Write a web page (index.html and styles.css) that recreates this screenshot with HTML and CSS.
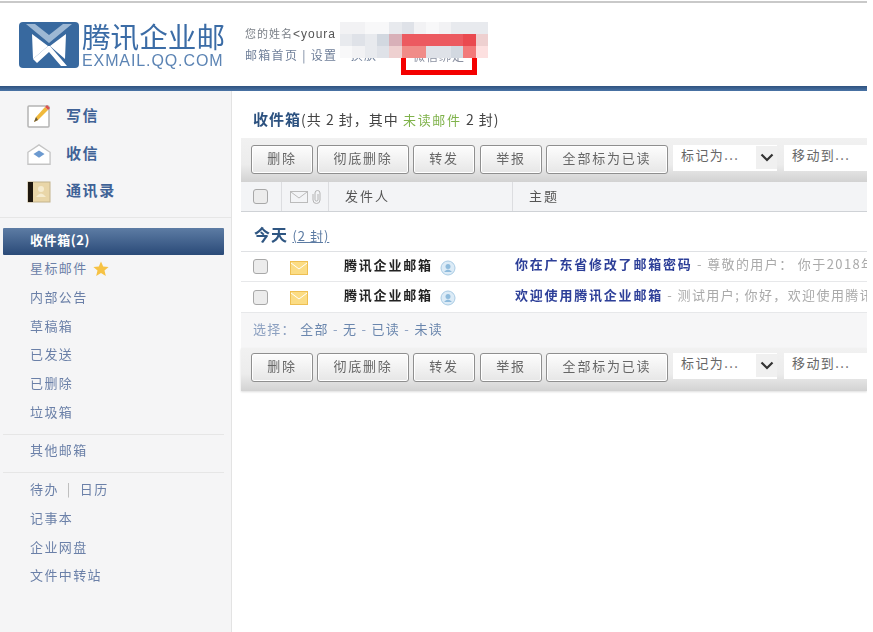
FILE: index.html
```html
<!DOCTYPE html>
<html lang="zh-CN">
<head>
<meta charset="utf-8">
<title>腾讯企业邮箱</title>
<link rel="stylesheet" href="styles.css">
</head>
<body>
<div class="page">
  <header class="top">
    <div class="logo">
      <svg class="logo-mark" width="60" height="46" viewBox="0 0 60 46">
        <rect x="0" y="0" width="60" height="46" rx="4" fill="#38699f"/>
        <path d="M7 2 L30 21 L53 2 L51 2 L44 2 L30 13 L16 2 Z" fill="#9db8d4"/>
        <path d="M13 12 L29 24 L14 37 Z M47 12 L31 24 L46 37 Z" fill="#fff"/>
        <path d="M30 26 L50 44 L10 44 Z" fill="#38699f"/>
        <path d="M14 37 L29 24 L31 24 L48 44 L42 44 L30 30 L18 41 Z" fill="#fff"/>
      </svg>
      <div class="logo-text">
        <div class="logo-cn">腾讯企业邮</div>
        <div class="logo-en">EXMAIL.QQ.COM</div>
      </div>
    </div>
    <div class="user">
      <div class="user-name">您的姓名<span class="addr">&lt;youra</span></div>
      <div class="user-links">邮箱首页<span class="pipe">|</span>设置 - 换肤</div>
    </div>
    <div class="marker"><span>微信绑定</span></div>
    <div class="mosaic">
      <i class="a1"></i><i class="a1"></i><i class="a0"></i><i class="a0"></i><i class="a2"></i><i class="a3"></i><i class="a1"></i><i class="a0"></i><i class="a1"></i><i class="a2"></i><i class="a2"></i><i class="a2"></i>
      <i class="a2"></i><i class="a3"></i><i class="a2"></i><i class="a4"></i><i class="r3"></i><i class="r1"></i><i class="r1"></i><i class="r1"></i><i class="r1"></i><i class="r1"></i><i class="r0"></i><i class="r4"></i>
      <i class="a0"></i><i class="a1"></i><i class="a2"></i><i class="a3"></i><i class="r4"></i><i class="r2"></i><i class="r2"></i><i class="a3"></i><i class="a3"></i><i class="a4"></i><i class="r5"></i><i class="r6"></i>
    </div>
  </header>
  <div class="band"></div>
  <div class="main">
    <aside class="side">
      <div class="actions">
        <a class="action">
          <svg width="24" height="24" viewBox="0 0 24 24"><rect x="1" y="1" width="21" height="21" rx="1" fill="#fff" stroke="#b4b4b4" stroke-width="1.5"/><path d="M7 17 L9 12 L18 2 L21 5 L11 15 Z" fill="#f0b93c"/><path d="M18 2 L20 0 L23 3 L21 5 Z" fill="#d9534f"/><path d="M7 17 L9 12 L11 15 Z" fill="#6a5a3a"/></svg>
          <b>写信</b>
        </a>
        <a class="action">
          <svg width="24" height="24" viewBox="0 0 26 24"><path d="M1 9 L13 1 L25 9 V22 H1 Z" fill="#fff" stroke="#c4c4c4" stroke-width="1.4"/><path d="M7 11 L13 7 L19 11 L13 15 Z" fill="#6c9ad0"/></svg>
          <b>收信</b>
        </a>
        <a class="action">
          <svg width="24" height="22" viewBox="0 0 24 22"><rect x="1" y="1" width="22" height="20" fill="#e9d6a8" stroke="#c4b48c"/><rect x="1" y="1" width="5" height="20" fill="#1e170e"/><circle cx="14" cy="8" r="3" fill="#f6ecd0"/><path d="M9 16 Q14 9 19 16 Z" fill="#f6ecd0"/></svg>
          <b>通讯录</b>
        </a>
      </div>
      <nav class="nav">
        <a class="item current">收件箱(2)</a>
        <a class="item">星标邮件
          <svg class="star" width="16" height="16" viewBox="0 0 16 16"><path d="M8 0.5 L10.2 5.6 L15.6 6 L11.5 9.6 L12.8 15 L8 12.1 L3.2 15 L4.5 9.6 L0.4 6 L5.8 5.6 Z" fill="#f6c244"/></svg>
        </a>
        <a class="item">内部公告</a>
        <a class="item">草稿箱</a>
        <a class="item">已发送</a>
        <a class="item">已删除</a>
        <a class="item">垃圾箱</a>
        <hr class="rule">
        <a class="item">其他邮箱</a>
        <hr class="rule tight">
        <a class="item">待办<span class="bar">|</span>日历</a>
        <a class="item">记事本</a>
        <a class="item">企业网盘</a>
        <a class="item">文件中转站</a>
      </nav>
    </aside>
    <section class="content">
      <h1 class="title"><b>收件箱</b>(共 2 封，其中 <span class="unread">未读邮件</span> 2 封)</h1>
      <div class="list">
        <div class="toolbar">
          <button class="btn w62">删除</button>
          <button class="btn w92">彻底删除</button>
          <button class="btn w62">转发</button>
          <button class="btn w62">举报</button>
          <button class="btn w122">全部标为已读</button>
          <div class="pick mark">标记为...<span class="caret"><svg width="14" height="9" viewBox="0 0 14 9"><path d="M1.5 1.5 L7 7 L12.5 1.5" fill="none" stroke="#333" stroke-width="2.2"/></svg></span></div>
          <div class="pick move">移动到...</div>
        </div>
        <div class="thead">
          <div class="c-check"><span class="box"></span></div>
          <div class="c-icons">
            <svg width="18" height="12" viewBox="0 0 18 12"><rect x=".5" y=".5" width="17" height="11" fill="#f3f4f6" stroke="#bbb"/><path d="M1 1 L9 7 L17 1" fill="none" stroke="#bbb"/></svg>
            <svg width="9" height="14" viewBox="0 0 9 14"><path d="M6 4 V10 A1.6 1.6 0 0 1 3 10 V3 A2.5 2.5 0 0 1 8 3 V10 A3.5 3.5 0 0 1 1 10 V4" fill="none" stroke="#b4b4b4"/></svg>
          </div>
          <div class="c-from">发件人</div>
          <div class="c-subj">主题</div>
        </div>
        <div class="group"><b>今天</b> <a>(2 封)</a></div>
        <div class="row first">
          <div class="r-check"><span class="box"></span></div>
          <div class="r-icon"><svg width="18" height="14" viewBox="0 0 18 14"><rect x=".5" y=".5" width="17" height="13" fill="#fbdc84" stroke="#eebf52"/><path d="M1 2 L9 8 L17 2" fill="none" stroke="#fff"/></svg></div>
          <div class="r-from"><b>腾讯企业邮箱</b>
            <svg class="contact" width="16" height="16" viewBox="0 0 16 16"><circle cx="8" cy="8" r="7" fill="#dcebf6" stroke="#a9cbe4"/><circle cx="8" cy="6.5" r="2.5" fill="#8fbbdc"/><path d="M4 12 Q8 7 12 12 Z" fill="#8fbbdc"/></svg>
          </div>
          <div class="r-subj"><b>你在广东省修改了邮箱密码</b><span class="preview"> - 尊敬的用户： 你于2018年</span></div>
        </div>
        <div class="row">
          <div class="r-check"><span class="box"></span></div>
          <div class="r-icon"><svg width="18" height="14" viewBox="0 0 18 14"><rect x=".5" y=".5" width="17" height="13" fill="#fbdc84" stroke="#eebf52"/><path d="M1 2 L9 8 L17 2" fill="none" stroke="#fff"/></svg></div>
          <div class="r-from"><b>腾讯企业邮箱</b>
            <svg class="contact" width="16" height="16" viewBox="0 0 16 16"><circle cx="8" cy="8" r="7" fill="#dcebf6" stroke="#a9cbe4"/><circle cx="8" cy="6.5" r="2.5" fill="#8fbbdc"/><path d="M4 12 Q8 7 12 12 Z" fill="#8fbbdc"/></svg>
          </div>
          <div class="r-subj"><b>欢迎使用腾讯企业邮箱</b><span class="preview"> - 测试用户; 你好，欢迎使用腾讯</span></div>
        </div>
        <div class="select">选择： <a>全部</a> - <a>无</a> - <a>已读</a> - <a>未读</a></div>
        <div class="toolbar bottom">
          <button class="btn w62">删除</button>
          <button class="btn w92">彻底删除</button>
          <button class="btn w62">转发</button>
          <button class="btn w62">举报</button>
          <button class="btn w122">全部标为已读</button>
          <div class="pick mark">标记为...<span class="caret"><svg width="14" height="9" viewBox="0 0 14 9"><path d="M1.5 1.5 L7 7 L12.5 1.5" fill="none" stroke="#333" stroke-width="2.2"/></svg></span></div>
          <div class="pick move">移动到...</div>
        </div>
      </div>
    </section>
  </div>
</div>
</body>
</html>
```
FILE: styles.css
```css
* { box-sizing: border-box; }
html, body { margin: 0; height: 100%; background: #fff; overflow: hidden; }
body {
  font-family: "Noto Sans CJK SC", "Liberation Serif", serif;
  font-size: 13px;
  color: #444;
}
.page {
  width: 867px;
  height: 632px;
  display: flex;
  flex-direction: column;
  overflow: hidden;
  filter: blur(0.55px);
}
.top {
  position: relative;
  height: 85px;
  margin-top: 1px;
  border-top: 2px solid #c9c9c9;
  display: flex;
  flex-shrink: 0;
  background: #fff;
}
.logo { display: flex; gap: 3px; padding: 19px 0 0 19px; width: 245px; }
.logo-mark { flex-shrink: 0; }
.logo-text { display: flex; flex-direction: column; margin-top: -3px; }
.logo-cn { font-size: 28.6px; line-height: 33px; color: #3b6ca6; white-space: nowrap; }
.logo-en {
  font-family: "Liberation Sans", sans-serif;
  font-size: 16px;
  line-height: 17px;
  letter-spacing: 0.9px;
  color: #5c84b4;
}
.user { padding-top: 22px; color: #7b8088; font-size: 11px; letter-spacing: 1px; white-space: nowrap; }
.user-name { line-height: 17px; }
.addr { font-family: "Liberation Sans", sans-serif; font-size: 12px; color: #555; }
.user-links { line-height: 20px; margin-top: 2px; color: #6f7f99; font-size: 12px; letter-spacing: 1.3px; }
.pipe { margin: 0 4px; }
.mosaic {
  position: absolute;
  left: 340px;
  top: 19px;
  width: 148px;
  display: grid;
  grid-template-columns: repeat(12, 12.33px);
  grid-auto-rows: 12px;
}
.a0 { background: #f8f8f9; }
.a1 { background: #f2f2f4; }
.a2 { background: #e8eaee; }
.a3 { background: #dfe2e8; }
.a4 { background: #d2d8e0; }
.r0 { background: #ea4a50; }
.r1 { background: #ec5a60; }
.r2 { background: #f08c88; }
.r3 { background: #d8b0b8; }
.r4 { background: #eed0d0; }
.r5 { background: #f27a7a; }
.r6 { background: #fde0e0; }
.marker {
  position: absolute;
  left: 401px;
  top: 43px;
  width: 76px;
  height: 29px;
  border: 5px solid #f40000;
  border-top: 0;
  font-size: 12px;
  letter-spacing: 1px;
  color: #8a90a0;
  text-align: center;
  white-space: nowrap;
  overflow: hidden;
}
.marker span { display: block; line-height: 16px; padding-top: 2px; }
.band { height: 5px; flex-shrink: 0; background: linear-gradient(#2f527f, #4a74a6); }
.main { flex: 1; display: flex; min-height: 0; }
.side {
  width: 232px;
  flex-shrink: 0;
  background: #f5f5f6;
  border-right: 1px solid #e3e3e3;
}
.actions {
  height: 127px;
  padding: 5px 0 0 27px;
  border-bottom: 1px solid #e6e6e6;
  display: flex;
  flex-direction: column;
}
.action { display: flex; align-items: center; height: 37.5px; gap: 15px; }
.action svg { flex-shrink: 0; margin-top: 5px; }
.action b {
  font-size: 15px;
  letter-spacing: 1.6px;
  color: #3f6296;
  font-weight: 700;
}
.nav { padding: 10px 7px 0 3px; display: flex; flex-direction: column; }
.item {
  height: 28.7px;
  line-height: 23px;
  padding: 0 0 5px 27px;
  color: #6b80a8;
  letter-spacing: 1.4px;
  display: flex;
  align-items: center;
  flex-shrink: 0;
}
.current {
  height: 27px;
  margin-bottom: 1px;
  color: #fff;
  font-weight: 700;
  letter-spacing: 0.6px;
  background: linear-gradient(#5d7ca4, #2a4a78);
  border-radius: 1px;
}
.star { margin-left: 5px; margin-top: 3px; }
.bar { margin: 0 8px; color: #b5b5b5; }
.rule { width: 100%; height: 1px; margin: 6px 0 3px; border: 0; background: #e6e6e6; flex-shrink: 0; }
.rule.tight { margin: 5px 0 4px; }
.content { flex: 1; min-width: 0; padding: 0 0 0 9px; }
.title {
  margin: 0;
  height: 47px;
  padding: 17px 0 0 12px;
  font-size: 14px;
  font-weight: 400;
  line-height: 22px;
  color: #444;
  letter-spacing: 1px;
  white-space: nowrap;
}
.title b { color: #2c517f; font-size: 15px; }
.unread { color: #7fb24a; font-size: 13px; letter-spacing: 1.7px; }
.toolbar {
  height: 44px;
  padding-top: 7px;
  padding-left: 10px;
  display: flex;
  gap: 4px;
  background: linear-gradient(#f1f1f1, #ececec 60%, #d2d2d2);
  overflow: hidden;
}
.toolbar.bottom { height: 43px; padding-top: 5px; box-shadow: 0 1px 2px #ddd; }
.btn {
  height: 29px;
  padding: 0 0 4px;
  flex-shrink: 0;
  border: 1px solid #8f8f8f;
  border-radius: 3px;
  background: linear-gradient(#fdfdfd, #e6e6e6);
  box-shadow: inset 0 0 0 1px #fff;
  font: inherit;
  font-size: 13px;
  letter-spacing: 1.8px;
  color: #666;
}
.btn:nth-child(4) { margin-left: 1px; }
.w62 { width: 62px; }
.w92 { width: 92px; }
.w122 { width: 122px; }
.pick {
  position: relative;
  height: 26px;
  flex-shrink: 0;
  background: #fff;
  padding: 0 0 0 8px;
  line-height: 20px;
  letter-spacing: 1.4px;
  color: #666;
  margin-left: 1px;
}
.mark { width: 104px; margin-right: 2px; }
.move { width: 100px; }
.caret {
  position: absolute;
  right: 0;
  top: 1px;
  width: 21px;
  height: 23px;
  background: #f0f0f0;
  display: flex;
  align-items: center;
  justify-content: center;
}
.thead {
  height: 30px;
  display: flex;
  align-items: center;
  background: #f3f4f6;
  border-bottom: 1px solid #cfd2d6;
  letter-spacing: 2px;
  color: #555;
}
.thead > div { height: 100%; display: flex; align-items: center; }
.c-check { width: 41px; padding-left: 12px; border-right: 1px solid #dcdde0; }
.c-icons { width: 47px; gap: 4px; padding-left: 8px; border-right: 1px solid #dcdde0; justify-content: flex-start; }
.c-from { width: 184px; padding: 0 0 2px 16px; border-right: 1px solid #dcdde0; }
.c-subj { padding: 0 0 2px 16px; }
.box {
  display: block;
  width: 15px;
  height: 15px;
  border: 1px solid #a8a8a8;
  border-radius: 3px;
  background: #ececec;
}
.group {
  height: 39px;
  padding: 11px 0 0 13px;
  font-size: 15px;
  line-height: 22px;
  letter-spacing: 1px;
  white-space: nowrap;
}
.group b { color: #2f5682; font-size: 16px; }
.group a { color: #5c7ba3; font-size: 13px; text-decoration: underline; }
.row {
  height: 31px;
  display: flex;
  align-items: center;
  border-bottom: 1px solid #e7e8ea;
  white-space: nowrap;
  overflow: hidden;
  letter-spacing: 1.4px;
}
.row.first { border-top: 1px solid #dfe1e4; }
.r-check { width: 49px; flex-shrink: 0; padding-left: 12px; }
.r-icon { width: 54px; flex-shrink: 0; display: flex; padding-top: 2px; }
.r-from { width: 171px; flex-shrink: 0; display: flex; align-items: center; gap: 7px; color: #222; }
.r-from b { font-size: 13px; letter-spacing: 1.8px; margin-top: -5px; }
.contact { margin-top: 2px; }
.r-subj { flex: 1 0 auto; color: #2d3f98; margin-top: -6px; }
.r-subj b { letter-spacing: 1.8px; }
.preview { color: #aaa; font-weight: 400; }
.select {
  height: 35px;
  padding: 2px 0 0 12px;
  line-height: 28px;
  background: #f6f6f7;
  color: #8ca0c0;
  letter-spacing: 1.3px;
  white-space: nowrap;
}
.select a { color: #6a86ad; }
```
